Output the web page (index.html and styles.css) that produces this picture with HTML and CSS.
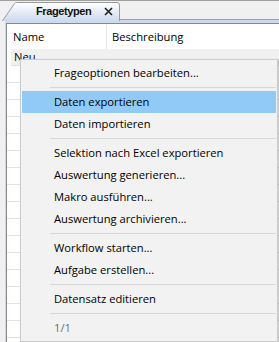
FILE: index.html
```html
<!DOCTYPE html>
<html lang="de">
<head>
	<meta charset="UTF-8">
	<title>Fragetypen</title>
	<link rel="stylesheet" href="styles.css">
</head>
<body>
	<div class="window">
		<div class="tabstrip">
			<div class="tab">
				<svg class="tab-bg" width="118" height="19" viewBox="0 0 118 19">
					<defs>
						<linearGradient id="tabfill" x1="0" y1="0" x2="0" y2="1">
							<stop offset="0" stop-color="#ffffff"/>
							<stop offset="1" stop-color="#ccd9ef"/>
						</linearGradient>
					</defs>
					<path d="M0 19.5 L12.5 1.6 Q13.3 0.5 14.6 0.5 L115 0.5 Q117.5 0.5 117.5 3 L117.5 19.5" fill="url(#tabfill)" stroke="#9a9a9a" stroke-width="1"/>
				</svg>
				<span class="tab-title">Fragetypen</span>
				<svg class="tab-close" width="9" height="9" viewBox="0 0 9 9">
					<path d="M1 1 L8 8 M8 1 L1 8" stroke="#1e1e1e" stroke-width="1.6" fill="none"/>
				</svg>
			</div>
		</div>
		<div class="frame">
			<div class="grid">
				<div class="grid-head">
					<div class="col col-name">Name</div>
					<div class="col col-desc">Beschreibung</div>
				</div>
				<div class="grid-row row-new">Neu...</div>
				<div class="grid-row"></div>
				<div class="grid-row"></div>
				<div class="grid-row"></div>
				<div class="grid-row"></div>
				<div class="grid-row"></div>
				<div class="grid-row"></div>
				<div class="grid-row"></div>
				<div class="grid-row"></div>
				<div class="grid-row"></div>
				<div class="grid-row"></div>
				<div class="grid-row"></div>
				<div class="grid-row"></div>
				<div class="grid-row"></div>
				<div class="grid-row"></div>
				<div class="grid-row"></div>
				<div class="grid-row"></div>
			</div>
		</div>

		<ul class="menu">
			<li class="menu-item">Frageoptionen bearbeiten...</li>
			<li class="menu-sep"></li>
			<li class="menu-item is-active">Daten exportieren</li>
			<li class="menu-item">Daten importieren</li>
			<li class="menu-sep"></li>
			<li class="menu-item">Selektion nach Excel exportieren</li>
			<li class="menu-item">Auswertung generieren...</li>
			<li class="menu-item">Makro ausführen...</li>
			<li class="menu-item">Auswertung archivieren...</li>
			<li class="menu-sep"></li>
			<li class="menu-item">Workflow starten...</li>
			<li class="menu-item">Aufgabe erstellen...</li>
			<li class="menu-sep"></li>
			<li class="menu-item">Datensatz editieren</li>
			<li class="menu-sep"></li>
			<li class="menu-item is-disabled">1/1</li>
		</ul>
	</div>
</body>
</html>
```

FILE: styles.css
```css
*{
  padding: 0;
  margin: 0;
  box-sizing: border-box;
}

body{
  background: #f0f0f0;
  font-family: "Open Sans", "Noto Sans", sans-serif;
  font-size: 11.2px;
  color: #000;
  overflow: hidden;
}

.window{
  position: relative;
  height: 342px;
  display: flex;
  flex-direction: column;
}

.tabstrip{
  border-top: 1px solid #a0a0a0;
  height: 20px;
  display: flex;
  align-items: flex-start;
  padding-left: 2px;
}

.tab{
  position: relative;
  z-index: 1;
  width: 118px;
  height: 19px;
  margin-top: 1px;
  display: flex;
  align-items: center;
  padding-left: 34px;
}

.tab-bg{
  position: absolute;
  left: 0;
  top: 0;
  z-index: -1;
}

.tab-title{
  font-family: "Liberation Sans", sans-serif;
  font-size: 11px;
  letter-spacing: -0.4px;
  font-weight: bold;
  line-height: 19px;
  color: #111;
}

.tab-close{
  margin-left: 13px;
}

.frame{
  flex: 1;
  display: flex;
  margin-left: 5px;
  padding: 3px 0 0 1px;
  border-top: 1px solid #a0a0a0;
  background: #ccd9ef;
  margin-top: -1px;
}

.grid{
  flex: 1;
  background: #fff;
  border-top: 1px solid #828790;
  border-left: 1px solid #828790;
}

.grid-head{
  display: flex;
  height: 25px;
  line-height: 25px;
}

.col-name{
  width: 100px;
  padding-left: 6px;
  border-right: 1px solid #e5e5e5;
}

.col-desc{
  padding-left: 5px;
}

.grid-row{
  height: 17px;
  line-height: 16px;
  border-bottom: 1px solid #e3e3e3;
}

.row-new{
  margin-left: 4px;
  padding-left: 3px;
  background: #f0f0f0;
}

.menu{
  position: absolute;
  left: 20px;
  top: 59px;
  width: 258px;
  list-style: none;
  padding: 2px 1px;
  background: #f2f2f2;
  border: 1px solid #cccccc;
  box-shadow: 1px 1px 2px rgba(0, 0, 0, .3);
}

.menu-item{
  height: 22px;
  line-height: 22px;
  padding-left: 32px;
  white-space: nowrap;
}

.menu-item.is-active{
  background: #91c9f7;
}

.menu-item.is-disabled{
  color: #6d6d6d;
}

.menu-sep{
  height: 1px;
  margin: 3px 0 3px 28px;
  background: #d7d7d7;
}
```
